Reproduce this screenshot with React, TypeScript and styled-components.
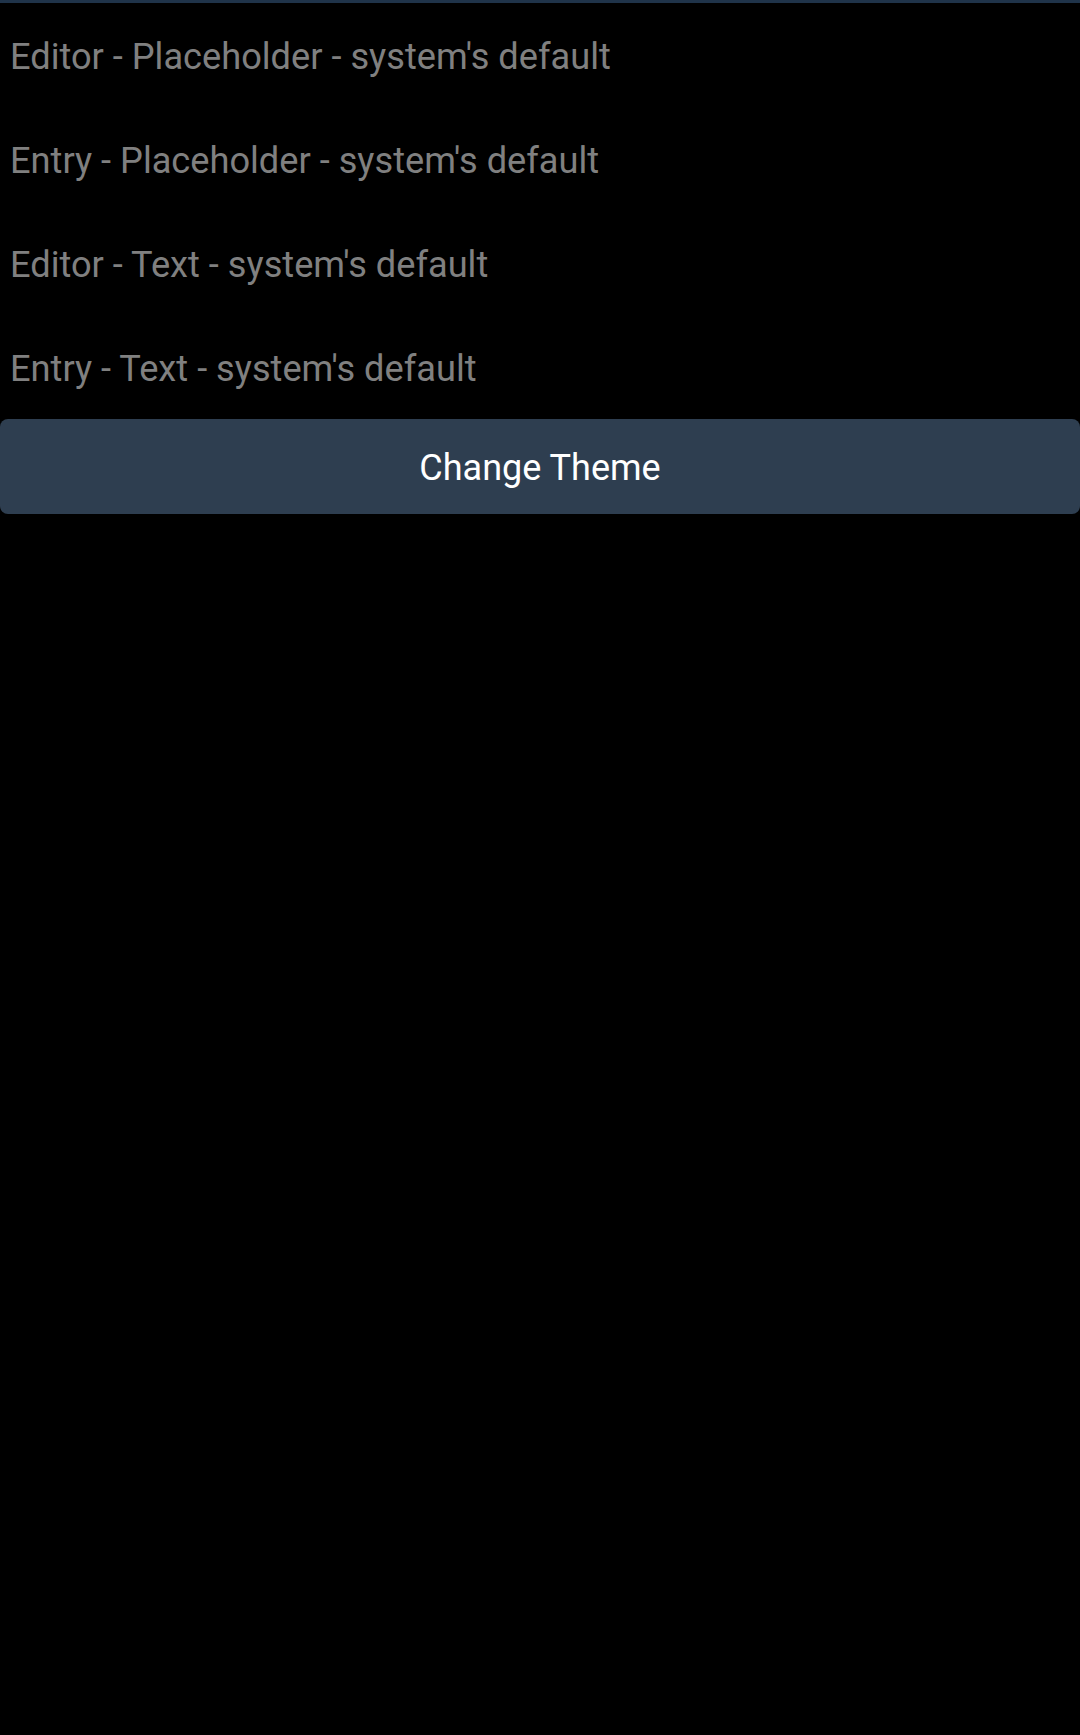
import React from "react";
import styled, { createGlobalStyle } from "styled-components";

const Global = createGlobalStyle`
  html, body {
    margin: 0;
    padding: 0;
    background: #000000;
  }
  body {
    font-family: Roboto, "Noto Sans", "Liberation Sans", sans-serif;
  }
`;

const Page = styled.div`
  width: 1080px;
  min-height: 1735px;
  background: #000000;
  display: flex;
  flex-direction: column;
`;

const TopLine = styled.div`
  height: 3px;
  background: #1f3349;
`;

const Field = styled.div`
  box-sizing: border-box;
  height: 104px;
  padding: 31.5px 0 0 10px;
  font-size: 36.2px;
  line-height: normal;
  color: #808080;
  white-space: nowrap;
`;

const ThemeButton = styled.button`
  box-sizing: border-box;
  height: 95px;
  width: 100%;
  margin: 0;
  border: none;
  border-radius: 8px;
  background: #2e3e50;
  color: #ffffff;
  font-family: Roboto, "Noto Sans", "Liberation Sans", sans-serif;
  font-size: 36px;
  display: flex;
  align-items: center;
  justify-content: center;
  padding: 2px 0 0 0;
  cursor: pointer;
`;

const fields = [
  "Editor - Placeholder - system's default",
  "Entry - Placeholder - system's default",
  "Editor - Text - system's default",
  "Entry - Text - system's default",
];

export default function App() {
  return (
    <>
      <Global />
      <Page>
        <TopLine />
        {fields.map((f) => (
          <Field key={f}>{f}</Field>
        ))}
        <ThemeButton>Change Theme</ThemeButton>
      </Page>
    </>
  );
}
